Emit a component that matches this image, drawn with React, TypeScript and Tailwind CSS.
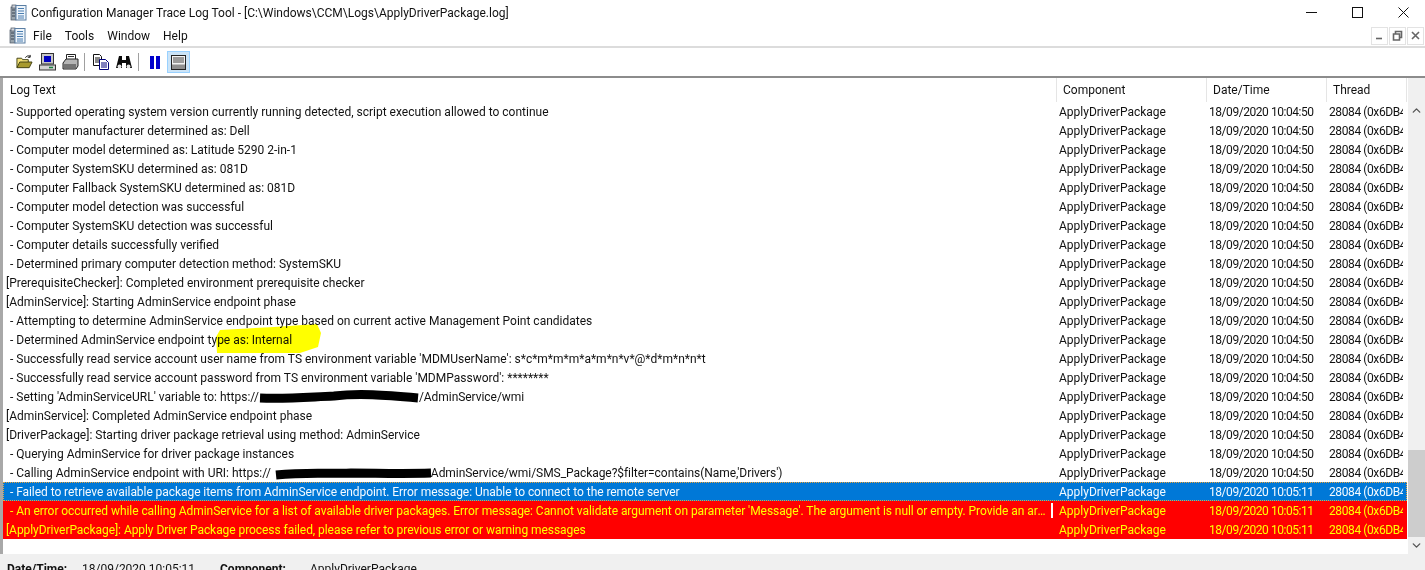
import { ChevronDown, ChevronUp } from 'lucide-react';

const ok = '18/09/2020 10:04:50';
const bad = '18/09/2020 10:05:11';

type LogRow = { text: string; kind?: string; blot?: string; after?: string };

const rows: LogRow[] = [
  { text: '- Supported operating system version currently running detected, script execution allowed to continue' },
  { text: '- Computer manufacturer determined as: Dell' },
  { text: '- Computer model determined as: Latitude 5290 2-in-1' },
  { text: '- Computer SystemSKU determined as: 081D' },
  { text: '- Computer Fallback SystemSKU determined as: 081D' },
  { text: '- Computer model detection was successful' },
  { text: '- Computer SystemSKU detection was successful' },
  { text: '- Computer details successfully verified' },
  { text: '- Determined primary computer detection method: SystemSKU' },
  { text: '[PrerequisiteChecker]: Completed environment prerequisite checker' },
  { text: '[AdminService]: Starting AdminService endpoint phase' },
  { text: '- Attempting to determine AdminService endpoint type based on current active Management Point candidates' },
  { text: '- Determined AdminService endpoint type as: Internal' },
  { text: "- Successfully read service account user name from TS environment variable 'MDMUserName': s*c*m*m*m*a*m*n*v*@*d*m*n*n*t" },
  { text: "- Successfully read service account password from TS environment variable 'MDMPassword': ********" },
  { text: "- Setting 'AdminServiceURL' variable to: https://", blot: 'M1 8C30 9 50 7 75 6c25-3 50-1 84 2', after: '/AdminService/wmi' },
  { text: '[AdminService]: Completed AdminService endpoint phase' },
  { text: '[DriverPackage]: Starting driver package retrieval using method: AdminService' },
  { text: '- Querying AdminService for driver package instances' },
  { text: '- Calling AdminService endpoint with URI: https://', blot: 'M5 9C35 6 50 8 80 7c25 0 50 1 80 0', after: "AdminService/wmi/SMS_Package?$filter=contains(Name,'Drivers')" },
  { text: '- Failed to retrieve available package items from AdminService endpoint. Error message: Unable to connect to the remote server', kind: 'selected' },
  { text: "- An error occurred while calling AdminService for a list of available driver packages. Error message: Cannot validate argument on parameter 'Message'. The argument is null or empty. Provide an argument that is not null or empty", kind: 'error' },
  { text: '[ApplyDriverPackage]: Apply Driver Package process failed, please refer to previous error or warning messages', kind: 'error' },
];

const AppIcon = () => (
  <svg width="17" height="17" viewBox="0 0 17 17" className="shrink-0">
    <rect x="1" y="3" width="5" height="13" fill="#9aa5ad" stroke="#4b5563" strokeWidth="0.7" />
    <rect x="2" y="1" width="4" height="3" fill="#d1d5db" stroke="#4b5563" strokeWidth="0.7" />
    <rect x="6" y="1.5" width="10" height="14.5" fill="#eef5fb" stroke="#5b7ea3" />
    <path d="M8 4.5h6M8 7h6M8 9.5h6M8 12h6M8 14h6" stroke="#4a7db0" strokeWidth="1" />
    <path d="M2 6h3M2 9h3M2 12h3" stroke="#374151" strokeWidth="1" />
  </svg>
);

const ToolbarIcons = () => (
  <div className="flex items-center h-full pl-[16px]">
    {/* open folder */}
    <svg width="17" height="16" viewBox="0 0 18 16" className="mr-[6px]">
      <path d="M1 14V4h5l1 1.500h6V8" fill="#f4e27a" stroke="#3f3f12" />
      <path d="M1 14l3-6h13l-3 6z" fill="#a89a2e" stroke="#3f3f12" />
      <path d="M10 3.500c1-2 3-2.500 5-1.500M15 0.500v2.500h-2.500" fill="none" stroke="#111" />
    </svg>
    {/* computer */}
    <svg width="17" height="18" viewBox="0 0 17 18" className="mr-[6px]">
      <rect x="2.500" y="0.500" width="12" height="10.500" fill="#c8c8c8" stroke="#333" />
      <rect x="5" y="3" width="7" height="6" fill="#0000c0" />
      <rect x="0.500" y="12" width="16" height="5" fill="#d4d4d4" stroke="#333" />
      <path d="M10 14.500h4" stroke="#15803d" strokeWidth="1.500" />
    </svg>
    {/* printer */}
    <svg width="17" height="16" viewBox="0 0 17 16" className="mr-[5px]">
      <path d="M4.500 0.500h9v5h-9z" fill="#fff" stroke="#222" />
      <path d="M1 9l3-4h12v7l-2 3H1z" fill="#b5b5b5" stroke="#222" />
      <path d="M2 11h12M2 13h12M6 2.500h6" stroke="#333" />
    </svg>
    <div className="w-px h-[18px] bg-[#a0a0a0] mr-[8px]" />
    {/* copy */}
    <svg width="16" height="16" viewBox="0 0 16 16" className="mr-[7px]">
      <path d="M0.500 0.500h6l2 2v9h-8z" fill="#fff" stroke="#111" />
      <path d="M2 4h5M2 6h5M2 8h5" stroke="#111" />
      <path d="M6.500 5.500h6l3 3v7h-9z" fill="#fff" stroke="#00007a" />
      <path d="M8 9h6M8 11h6M8 13h6" stroke="#00007a" />
    </svg>
    {/* find */}
    <svg width="16" height="15" viewBox="0 0 16 15" className="mr-[6px]">
      <path d="M3 1h3v4h4V1h3l3 12h-6V8H6v5H0z" fill="#0a0a0a" />
      <circle cx="3.500" cy="11.500" r="2" fill="#e5e5e5" />
      <circle cx="12.500" cy="11.500" r="2" fill="#e5e5e5" />
    </svg>
    <div className="w-px h-[18px] bg-[#a0a0a0] mr-[11px]" />
    {/* pause */}
    <div className="flex gap-[2px] mr-[7px]">
      <div className="w-[4px] h-[13px] bg-[#0000cc]" />
      <div className="w-[4px] h-[13px] bg-[#0000cc]" />
    </div>
    {/* details pane toggle */}
    <div className="w-[23px] h-[22px] flex items-center justify-center bg-[#cce4f7] border border-[#99d1ff]">
      <svg width="15" height="15" viewBox="0 0 15 15">
        <rect x="0.500" y="0.500" width="14" height="14" fill="#f3f3f3" stroke="#222" />
        <path d="M2 3h11M2 5h11M2 7h11" stroke="#444" />
        <rect x="1" y="9.500" width="13" height="4.500" fill="#8f8f8f" />
      </svg>
    </div>
  </div>
);

const MdiButton = ({ d }: { d: string }) => (
  <div className="w-[17px] h-[18px] flex items-center justify-center border border-[#e3e3e3]">
    <svg width="11" height="11" viewBox="0 0 11 11">
      <path d={d} fill="none" stroke="#666" strokeWidth="1.600" />
    </svg>
  </div>
);

const Row = ({ row, index }: { row: LogRow; index: number }) => {
  const isSelected = row.kind === 'selected';
  const isError = row.kind === 'error';
  const rowColor = isSelected
    ? 'bg-[#0078d7] text-[#f4faff] outline-1 -outline-offset-1 outline-dotted outline-[#e8a33c]'
    : isError
      ? 'bg-[#ff0000] text-[#ffff00]'
      : 'text-[#111]';
  return (
    <div className={`flex h-[19px] items-center whitespace-pre ${rowColor}`}>
      <div className={`w-[1054px] shrink-0 flex items-center overflow-hidden ${row.text.startsWith('-') ? 'pl-[7px]' : 'pl-[3px]'}`}>
        <span className={`${index === 21 ? 'block w-[1040px] truncate' : ''} ${row.kind ? 'tracking-[-0.06px]' : ''}`}>{row.text}</span>
        {index === 21 ? <div className="w-[2px] h-[15px] shrink-0 bg-white ml-px" /> : null}
        {row.blot ? (
          <svg width="160" height="14" viewBox="0 0 160 14" className="shrink-0">
            <path d={row.blot} fill="none" stroke="#000" strokeWidth="9" />
          </svg>
        ) : null}
        {row.after ? <span className="tracking-[-0.05px]">{row.after}</span> : null}
      </div>
      <div className="w-[150px] shrink-0 pl-[2px]">ApplyDriverPackage</div>
      <div className="w-[120px] shrink-0 pl-[2px] tracking-[-0.45px]">{isSelected || isError ? bad : ok}</div>
      <div className="w-[76px] shrink-0 pl-[2px] overflow-hidden tracking-[-0.4px]">28084 (0x6DB4)</div>
    </div>
  );
};

export default function App() {
  return (
    <div className="relative w-[1425px] h-[570px] overflow-hidden bg-white font-['Roboto',sans-serif] text-[12px] text-[#111] flex flex-col">
      {/* title bar */}
      <div className="h-[25px] shrink-0 flex items-center pl-[10px] gap-[4px]">
        <AppIcon />
        <span className="leading-none">Configuration Manager Trace Log Tool - [C:\Windows\CCM\Logs\ApplyDriverPackage.log]</span>
        <div className="ml-auto flex items-center pr-[16px] gap-[35px]">
          <svg width="11" height="11" viewBox="0 0 11 11"><path d="M0 5.500h11" stroke="#111" /></svg>
          <svg width="11" height="11" viewBox="0 0 11 11"><rect x="0.500" y="0.500" width="10" height="10" fill="none" stroke="#111" /></svg>
          <svg width="11" height="11" viewBox="0 0 11 11"><path d="M0.500 0.500l10 10M10.500 0.500l-10 10" stroke="#111" /></svg>
        </div>
      </div>

      {/* menu */}
      <div className="h-[23px] shrink-0 flex items-center pl-[9px] border-b-2 border-[#dcdcdc]">
        <AppIcon />
        <div className="flex gap-[13px] pl-[6px]">
          <span className="ml-px">File</span>
          <span>Tools</span>
          <span>Window</span>
          <span>Help</span>
        </div>
        <div className="ml-auto flex items-center gap-[1px] pr-[1px]">
          <MdiButton d="M2 8.500h6" />
          <MdiButton d="M1.500 4h6v6h-6zM3.500 4V1.500h6v6H7.500" />
          <MdiButton d="M2 2l7 7M9 2l-7 7" />
        </div>
      </div>

      {/* toolbar */}
      <div className="h-[30px] shrink-0 border-b-2 border-[#8c8c8c]">
        <ToolbarIcons />
      </div>

      {/* list */}
      <div className="h-[476px] shrink-0 flex border-l-[3px] border-[#a8a8a8]">
        <div className="w-[1404px] shrink-0 flex flex-col">
          <div className="h-[24px] shrink-0 flex items-center">
            <div className="w-[1054px] shrink-0 pl-[7px] border-r border-[#e5e5e5] h-full flex items-center">Log Text</div>
            <div className="w-[150px] shrink-0 pl-[6px] border-r border-[#e5e5e5] h-full flex items-center">Component</div>
            <div className="w-[120px] shrink-0 pl-[6px] border-r border-[#e5e5e5] h-full flex items-center">Date/Time</div>
            <div className="w-[80px] shrink-0 pl-[6px] border-r border-[#e5e5e5] h-full flex items-center">Thread</div>
          </div>
          {rows.map((row, i) => (
            <Row key={i} row={row} index={i} />
          ))}
        </div>
        <div className="flex-1 flex flex-col items-center bg-[#f0f0f0] text-[#555] pb-[2px] pt-[26px] ml-px">
          <ChevronUp size={13} strokeWidth={2.5} />
          <div className="w-full h-[87px] bg-[#cdcdcd] mt-auto mb-[2px]" />
          <ChevronDown size={13} strokeWidth={2.5} />
        </div>
      </div>

      {/* details pane */}
      <div className="flex-1 bg-[#f0f0f0] flex items-start pl-[7px] pt-[7px] leading-[16px]">
        <span className="font-bold w-[75px]">Date/Time:</span>
        <span className="w-[138px]">{bad}</span>
        <span className="font-bold w-[90px]">Component:</span>
        <span>ApplyDriverPackage</span>
      </div>

      {/* highlighter stroke over the log */}
      <svg className="absolute left-[214px] top-[323px] mix-blend-multiply" width="108" height="32" viewBox="0 0 108 32">
        <path d="M2 14L6 7 60 4 103 1 107 10 104 24 86 30H3z" fill="#ffff00" />
      </svg>
    </div>
  );
}
